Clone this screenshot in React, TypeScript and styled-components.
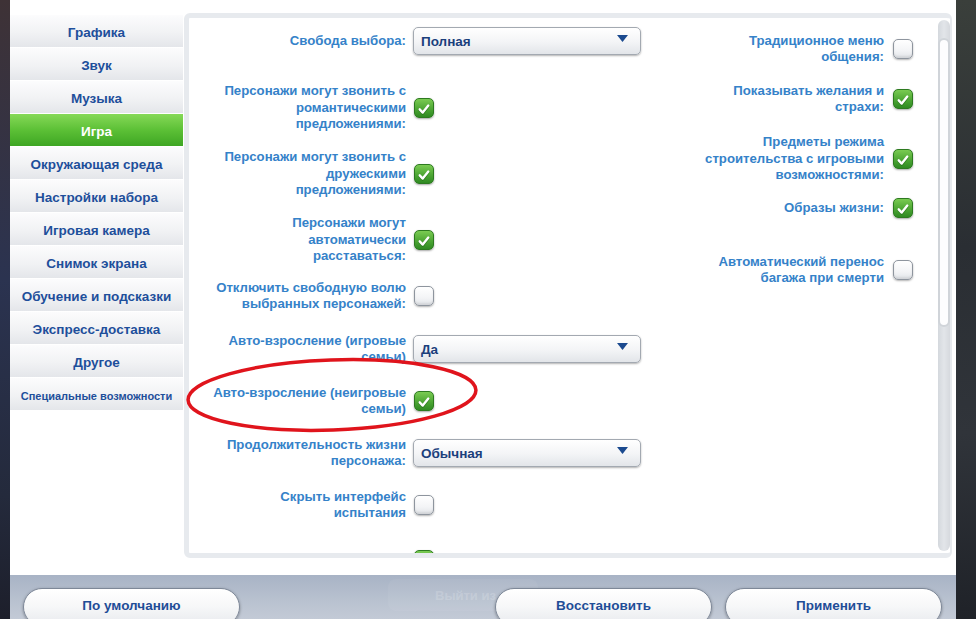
import React from "react";
import styled, { createGlobalStyle } from "styled-components";

const GlobalStyle = createGlobalStyle`
  body {
    margin: 0;
    overflow: hidden;
    font-family: "Liberation Sans", Arial, sans-serif;
  }
`;

interface Setting {
  label: string;
  kind: "check" | "select";
  checked?: boolean;
  value?: string;
  h: number;
  mt: number;
}

const tabs = [
  "Графика",
  "Звук",
  "Музыка",
  "Игра",
  "Окружающая среда",
  "Настройки набора",
  "Игровая камера",
  "Снимок экрана",
  "Обучение и подсказки",
  "Экспресс-доставка",
  "Другое",
  "Специальные возможности",
];

const leftSettings: Setting[] = [
  { label: "Свобода выбора:", kind: "select", value: "Полная", h: 46, mt: 0 },
  {
    label: "Персонажи могут звонить с\nромантическими\nпредложениями:",
    kind: "check",
    checked: true,
    h: 56,
    mt: 16,
  },
  {
    label: "Персонажи могут звонить с\nдружескими\nпредложениями:",
    kind: "check",
    checked: true,
    h: 56,
    mt: 10,
  },
  {
    label: "Персонажи могут\nавтоматически\nрасставаться:",
    kind: "check",
    checked: true,
    h: 56,
    mt: 10,
  },
  {
    label: "Отключить свободную волю\nвыбранных персонажей:",
    kind: "check",
    checked: false,
    h: 36,
    mt: 10,
  },
  {
    label: "Авто-взросление (игровые\nсемьи)",
    kind: "select",
    value: "Да",
    h: 50,
    mt: 10,
  },
  {
    label: "Авто-взросление (неигровые\nсемьи)",
    kind: "check",
    checked: true,
    h: 34,
    mt: 10,
  },
  {
    label: "Продолжительность жизни\nперсонажа:",
    kind: "select",
    value: "Обычная",
    h: 50,
    mt: 10,
  },
  {
    label: "Скрыть интерфейс\nиспытания",
    kind: "check",
    checked: false,
    h: 34,
    mt: 10,
  },
  // cut off by the bottom of the panel
  { label: "", kind: "check", checked: true, h: 40, mt: 18 },
];

const rightSettings: Setting[] = [
  { label: "Традиционное меню\nобщения:", kind: "check", checked: false, h: 34, mt: 14 },
  { label: "Показывать желания и\nстрахи:", kind: "check", checked: true, h: 34, mt: 16 },
  {
    label: "Предметы режима\nстроительства с игровыми\nвозможностями:",
    kind: "check",
    checked: true,
    h: 50,
    mt: 18,
  },
  { label: "Образы жизни:", kind: "check", checked: true, h: 20, mt: 14 },
  {
    label: "Автоматический перенос\nбагажа при смерти",
    kind: "check",
    checked: false,
    h: 34,
    mt: 35,
  },
];

const CheckBox = ({ checked }: { checked?: boolean }) => (
  <Box $checked={!!checked}>
    {checked && (
      <svg width="20" height="20" viewBox="0 0 20 20">
        <path
          d="M5.2 10.4 L8.6 14 L14.8 6.2"
          fill="none"
          stroke="rgba(0,60,0,0.35)"
          strokeWidth="3"
          strokeLinecap="round"
          strokeLinejoin="round"
          transform="translate(0 0.8)"
        />
        <path
          d="M5.2 10.4 L8.6 14 L14.8 6.2"
          fill="none"
          stroke="#ffffff"
          strokeWidth="2.6"
          strokeLinecap="round"
          strokeLinejoin="round"
        />
      </svg>
    )}
  </Box>
);

const Select = ({ value }: { value?: string }) => (
  <Dropdown>
    <span>{value}</span>
    <svg width="11" height="7" viewBox="0 0 11 7">
      <path d="M0 0 H11 L5.5 7 Z" fill="#1b4a8f" />
    </svg>
  </Dropdown>
);

export default function App() {
  return (
    <>
      <GlobalStyle />
      <Page>
        <Edge $w={10} $bg="linear-gradient(180deg, #3e3236 0%, #2b3350 45%, #242a3c 80%, #1d1f2b 100%)" />
        <Window>
          <Body>
            <Sidebar>
              {tabs.map((t, i) => (
                <Tab key={t} $active={i === 3} $small={i === tabs.length - 1}>
                  {t}
                </Tab>
              ))}
            </Sidebar>
            <ContentArea>
              <Panel>
                <Columns>
                  <LeftCol>
                    {leftSettings.map((s, i) => (
                      <Row key={i} $h={s.h} $mt={s.mt}>
                        <Label $w={217}>{s.label}</Label>
                        {s.kind === "select" ? (
                          <Select value={s.value} />
                        ) : (
                          <CheckSlot>
                            <CheckBox checked={s.checked} />
                          </CheckSlot>
                        )}
                      </Row>
                    ))}
                  </LeftCol>
                  <RightCol>
                    {rightSettings.map((s, i) => (
                      <RightRow key={i} $h={s.h} $mt={s.mt}>
                        <Label>{s.label}</Label>
                        <CheckBox checked={s.checked} />
                      </RightRow>
                    ))}
                  </RightCol>
                </Columns>
                <ScrollTrack>
                  <ScrollThumb />
                </ScrollTrack>
              </Panel>
            </ContentArea>
          </Body>
          <BottomBar>
            <Ghost>Выйти из игры</Ghost>
            <PillButton>По умолчанию</PillButton>
            <ButtonGroup>
              <PillButton>Восстановить</PillButton>
              <PillButton>Применить</PillButton>
            </ButtonGroup>
          </BottomBar>
          <Annotation width="310" height="90" viewBox="0 0 310 90">
            <ellipse
              cx="155"
              cy="45"
              rx="144"
              ry="35"
              fill="none"
              stroke="#e0141c"
              strokeWidth="3.5"
              transform="rotate(-2 155 45)"
            />
          </Annotation>
        </Window>
        <Edge $w={20} $bg="linear-gradient(180deg, #3a3f3b 0%, #2a2e33 40%, #30343a 70%, #1f2228 100%)" />
      </Page>
    </>
  );
}

const Page = styled.div`
  display: flex;
  width: 976px;
  height: 619px;
  overflow: hidden;
`;

const Edge = styled.div<{ $w: number; $bg: string }>`
  width: ${(p) => p.$w}px;
  flex-shrink: 0;
  background: ${(p) => p.$bg};
`;

const Window = styled.div`
  position: relative;
  flex: 1;
  display: flex;
  flex-direction: column;
  background: #ffffff;
`;

const Body = styled.div`
  display: flex;
  height: 575px;
`;

const Sidebar = styled.div`
  width: 173px;
  flex-shrink: 0;
  padding-top: 15px;
  display: flex;
  flex-direction: column;
  gap: 1px;
`;

const Tab = styled.div<{ $active: boolean; $small: boolean }>`
  height: 32px;
  display: flex;
  align-items: center;
  justify-content: center;
  padding-top: 3px;
  box-sizing: border-box;
  font-weight: 700;
  font-size: ${(p) => (p.$small ? "11px" : "13.5px")};
  color: ${(p) => (p.$active ? "#ffffff" : "#1e4f9b")};
  background: ${(p) =>
    p.$active
      ? "linear-gradient(180deg, #86d957 0%, #5cc036 50%, #3ea623 100%)"
      : "linear-gradient(180deg, #fcfcfd 0%, #f1f2f4 55%, #e4e6ea 100%)"};
`;

const ContentArea = styled.div`
  flex: 1;
  padding: 13px 4px 17px 1px;
  display: flex;
`;

const Panel = styled.div`
  flex: 1;
  display: flex;
  overflow: hidden;
  border: 5px solid #e7eaee;
  border-right-width: 2px;
  border-radius: 6px;
  background: #ffffff;
`;

const Columns = styled.div`
  flex: 1;
  display: flex;
`;

const LeftCol = styled.div`
  width: 455px;
  display: flex;
  flex-direction: column;
`;

const Row = styled.div<{ $h: number; $mt: number }>`
  display: flex;
  align-items: center;
  gap: 7px;
  height: ${(p) => p.$h}px;
  margin-top: ${(p) => p.$mt}px;
  flex-shrink: 0;
`;

const RightCol = styled.div`
  flex: 1;
  display: flex;
  flex-direction: column;
  align-items: flex-end;
  padding-right: 25px;
`;

const RightRow = styled(Row)`
  gap: 9px;
`;

const Label = styled.div<{ $w?: number }>`
  width: ${(p) => (p.$w ? `${p.$w}px` : "auto")};
  text-align: right;
  white-space: pre-line;
  font-size: 13.2px;
  font-weight: 700;
  line-height: 16.5px;
  color: #3582c9;
`;

const CheckSlot = styled.div`
  margin-left: 1px;
  display: flex;
`;

const Box = styled.div<{ $checked: boolean }>`
  width: 20px;
  height: 20px;
  box-sizing: border-box;
  border-radius: 5px;
  display: flex;
  flex-shrink: 0;
  border: 1px solid ${(p) => (p.$checked ? "#2d7a20" : "#8e959e")};
  background: ${(p) =>
    p.$checked
      ? "linear-gradient(180deg, #7acb52 0%, #4da634 55%, #2f8a22 100%)"
      : "linear-gradient(180deg, #ffffff 0%, #f3f4f6 60%, #e2e5e9 100%)"};
  box-shadow: ${(p) =>
    p.$checked
      ? "0 1px 2px rgba(0,0,0,0.35)"
      : "inset 0 -2px 2px rgba(0,0,0,0.08), 0 1px 2px rgba(0,0,0,0.3)"};
`;

const Dropdown = styled.div`
  width: 228px;
  height: 28px;
  box-sizing: border-box;
  display: flex;
  align-items: center;
  justify-content: space-between;
  padding: 1px 12px 0 7px;
  border: 1px solid #a3a9b1;
  border-radius: 5px;
  background: linear-gradient(180deg, #ffffff 0%, #f3f4f6 55%, #e2e5e9 100%);
  box-shadow: 0 1px 2px rgba(0, 0, 0, 0.3);
  font-size: 13.5px;
  font-weight: 700;
  color: #1b3f7c;

  svg {
    margin-top: -6px;
  }
`;

const ScrollTrack = styled.div`
  width: 12px;
  margin: 2px 0;
  border-radius: 6px;
  background: linear-gradient(90deg, #d4d8dd 0%, #e2e5e9 50%, #d6d9de 100%);
  padding-top: 18px;
  box-sizing: border-box;
`;

const ScrollThumb = styled.div`
  height: 289px;
  box-sizing: border-box;
  border: 2px solid #d0d4d9;
  border-radius: 6px;
  background: #fdfdfe;
`;

const BottomBar = styled.div`
  position: relative;
  height: 44px;
  display: flex;
  align-items: flex-start;
  padding: 13px 14px 0 13px;
  box-sizing: border-box;
  overflow: hidden;
  background: linear-gradient(180deg, #a8b3c5 0%, #b9c2d0 60%, #c3cad6 100%);
`;

const ButtonGroup = styled.div`
  margin-left: auto;
  display: flex;
  gap: 13px;
`;

const PillButton = styled.div`
  position: relative;
  width: 217px;
  height: 38px;
  box-sizing: border-box;
  padding-top: 9px;
  text-align: center;
  border: 1px solid #7e8898;
  border-radius: 19px;
  background: linear-gradient(180deg, #ffffff 0%, #f6f7f8 50%, #e8eaee 100%);
  box-shadow: 0 1px 3px rgba(0, 0, 0, 0.35);
  font-size: 13.5px;
  font-weight: 700;
  line-height: 15px;
  color: #1f4d97;
`;

/* faded button of the game menu showing through the bar */
const Ghost = styled.div`
  position: absolute;
  left: 378px;
  top: 4px;
  width: 150px;
  height: 32px;
  border-radius: 8px;
  background: rgba(255, 255, 255, 0.05);
  padding: 9px 0 0 47px;
  box-sizing: border-box;
  font-size: 13px;
  font-weight: 700;
  color: rgba(255, 255, 255, 0.18);
`;

const Annotation = styled.svg`
  position: absolute;
  left: 167px;
  top: 350px;
  pointer-events: none;
`;
